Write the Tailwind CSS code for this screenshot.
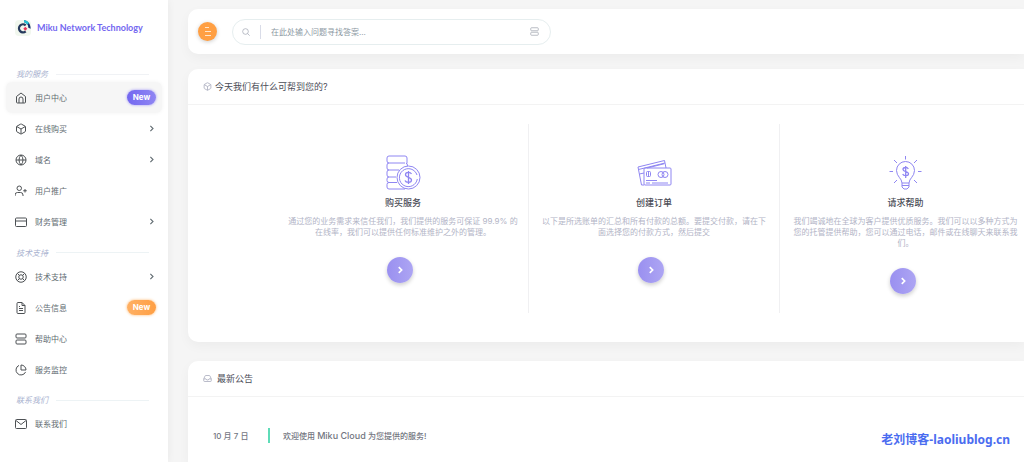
<!DOCTYPE html>
<html lang="en">
<head>
<meta charset="utf-8">
<title>Miku Network Technology</title>
<script src="https://cdn.jsdelivr.net/npm/@tailwindcss/browser@4"></script>
</head>
<body class="bg-[#f5f5f5] font-['Inter','Noto_Sans_CJK_SC',sans-serif] text-[8px] text-[#626c72]">
<svg class="hidden">
  <defs>
    <symbol id="box" viewBox="0 0 24 24"><path d="M21 16V8a2 2 0 0 0-1-1.700l-7-4a2 2 0 0 0-2 0l-7 4A2 2 0 0 0 3 8v8a2 2 0 0 0 1 1.700l7 4a2 2 0 0 0 2 0l7-4a2 2 0 0 0 1-1.700zM3.300 7 12 12l8.700-5M12 22V12"/></symbol>
    <symbol id="server" viewBox="0 0 24 24"><rect x="2" y="2" width="20" height="8" rx="2"/><rect x="2" y="14" width="20" height="8" rx="2"/><path d="M6 6h.01M6 18h.01"/></symbol>
    <symbol id="chev" viewBox="0 0 24 24"><path d="m9 5 7 7-7 7"/></symbol>
  </defs>
</svg>
<div class="flex min-h-screen overflow-hidden relative">
  <aside class="w-[168px] shrink-0 bg-white shadow-[0_0_8px_rgba(0,0,0,0.06)]">
    <a href="#" class="flex items-center h-[59px] pl-[15px] pb-1 gap-[6px] font-['Lato',sans-serif] text-[9px] font-bold text-[#7367f0] whitespace-nowrap">
      <svg class="size-4 shrink-0" viewBox="0 0 48 48">
        <rect width="48" height="48" rx="12" fill="#f1f7ee"/>
        <path d="M32 16A12 12 0 1 0 32 34" fill="none" stroke="#263a5c" stroke-width="7"/>
        <path d="M27 1c9 0 20 9 20 25l-7-3C40 14 34 8 27 7z" fill="#15306b"/>
        <path d="M27 1c6 0 11 3 15 8l-6 5c-2-4-5-6-9-7z" fill="#21c4d6"/>
        <path d="m31 20 6 6-6 6-6-6z" fill="#e8345a"/>
      </svg>
      Miku Network Technology
    </a>
    <nav>
      <div class="flex items-center h-[23px] pt-[7px] pl-4 pr-[19px] gap-2 italic text-[#a9b2cf]">我的服务<span class="flex-1 h-px bg-[#f0f2f5]"></span></div>
      <a href="#" class="flex items-center h-[31px] mx-[6px] pl-[9px] pr-[6px] gap-2 rounded-md bg-[#f6f6f6] shadow-[0_0_4px_#f3f3f3]">
        <svg class="size-3 fill-none stroke-[#4d5154] stroke-2" viewBox="0 0 24 24"><path d="m3 9 9-7 9 7v11a2 2 0 0 1-2 2H5a2 2 0 0 1-2-2zM8 22v-8a4 4 0 0 1 8 0v8"/></svg>
        <span class="flex-1">用户中心</span>
        <span class="h-[15px] w-[29px] rounded-full bg-linear-to-r from-[#7367f0] to-[#9086f3] text-white font-bold text-center leading-[15px] shadow-[0_0_3px_#9e95f5]">New</span>
      </a>
      <a href="#" class="flex items-center h-[31px] mx-[6px] pl-[9px] pr-[6px] gap-2">
        <svg class="size-3 fill-none stroke-[#4d5154] stroke-2"><use href="#box"/></svg>
        <span class="flex-1">在线购买</span>
        <svg class="size-[9px] fill-none stroke-current stroke-3"><use href="#chev"/></svg>
      </a>
      <a href="#" class="flex items-center h-[31px] mx-[6px] pl-[9px] pr-[6px] gap-2">
        <svg class="size-3 fill-none stroke-[#4d5154] stroke-2" viewBox="0 0 24 24"><circle cx="12" cy="12" r="10"/><path d="M2 12h20M12 2a15 15 0 0 1 4 10 15 15 0 0 1-4 10 15 15 0 0 1-4-10 15 15 0 0 1 4-10z"/></svg>
        <span class="flex-1">域名</span>
        <svg class="size-[9px] fill-none stroke-current stroke-3"><use href="#chev"/></svg>
      </a>
      <a href="#" class="flex items-center h-[31px] mx-[6px] pl-[9px] pr-[6px] gap-2">
        <svg class="size-3 fill-none stroke-[#4d5154] stroke-2" viewBox="0 0 24 24"><path d="M16 22v-2a5 5 0 0 0-5-5H5a5 5 0 0 0-5 5v2M20 8v7M23.500 11.500h-7"/><circle cx="8.500" cy="6.500" r="4.500"/></svg>
        <span class="flex-1">用户推广</span>
      </a>
      <a href="#" class="flex items-center h-[31px] mx-[6px] pl-[9px] pr-[6px] gap-2">
        <svg class="size-3 fill-none stroke-[#4d5154] stroke-2" viewBox="0 0 24 24"><rect x="1" y="4" width="22" height="17" rx="2"/><path d="M1 10h22"/></svg>
        <span class="flex-1">财务管理</span>
        <svg class="size-[9px] fill-none stroke-current stroke-3"><use href="#chev"/></svg>
      </a>
      <div class="flex items-center h-6 pt-[7px] pl-4 pr-[19px] gap-2 italic text-[#a9b2cf]">技术支持<span class="flex-1 h-px bg-[#edf3f5]"></span></div>
      <a href="#" class="flex items-center h-[31px] mx-[6px] pl-[9px] pr-[6px] gap-2">
        <svg class="size-3 fill-none stroke-[#4d5154] stroke-2" viewBox="0 0 24 24"><circle cx="12" cy="12" r="10.500"/><circle cx="12" cy="12" r="4.500"/><path d="m4.900 4.900 4.200 4.200M14.900 14.900l4.200 4.200M14.900 9.100l4.200-4.200M4.900 19.100l4.200-4.200"/></svg>
        <span class="flex-1">技术支持</span>
        <svg class="size-[9px] fill-none stroke-current stroke-3"><use href="#chev"/></svg>
      </a>
      <a href="#" class="flex items-center h-[31px] mx-[6px] pl-[9px] pr-[6px] gap-2">
        <svg class="size-3 fill-none stroke-[#4d5154] stroke-2" viewBox="0 0 24 24"><path d="M14 1H6a2 2 0 0 0-2 2v18a2 2 0 0 0 2 2h12a2 2 0 0 0 2-2V7zM14 1v6h6M16 13H8M16 17H8M10 9H8"/></svg>
        <span class="flex-1">公告信息</span>
        <span class="h-[15px] w-[29px] rounded-full bg-linear-to-r from-[#ffb063] to-[#ff9f43] text-white font-bold text-center leading-[15px] shadow-[0_0_3px_#ffb76e]">New</span>
      </a>
      <a href="#" class="flex items-center h-[31px] mx-[6px] pl-[9px] pr-[6px] gap-2">
        <svg class="size-3 fill-none stroke-[#4d5154] stroke-2"><use href="#server"/></svg>
        <span class="flex-1">帮助中心</span>
      </a>
      <a href="#" class="flex items-center h-[31px] mx-[6px] pl-[9px] pr-[6px] gap-2">
        <svg class="size-3 fill-none stroke-[#4d5154] stroke-2" viewBox="0 0 24 24"><path d="M21.200 15.900A10 10 0 1 1 8 2.800M22 12A10 10 0 0 0 12 2v10z"/></svg>
        <span class="flex-1">服务监控</span>
      </a>
      <div class="flex items-center h-[23px] pt-[7px] pl-4 pr-[19px] gap-2 italic text-[#a9b2cf]">联系我们<span class="flex-1 h-px bg-[#edf3f5]"></span></div>
      <a href="#" class="flex items-center h-[31px] mx-[6px] pl-[9px] pr-[6px] gap-2">
        <svg class="size-3 fill-none stroke-[#4d5154] stroke-2" viewBox="0 0 24 24"><rect x="1" y="3" width="22" height="18" rx="2"/><path d="m2 5 10 8 10-8"/></svg>
        <span class="flex-1">联系我们</span>
      </a>
    </nav>
  </aside>

  <main class="flex-1 min-w-0 flex flex-col pl-5 pt-[9px]">
    <header class="flex items-center h-[45px] rounded-l-[10px] bg-white pl-[10px] gap-[15px] shadow-[0_4px_12px_rgba(0,0,0,0.04)]">
      <button aria-label="Menu" class="size-[19px] rounded-full bg-[#ff9f43] flex items-center justify-center shadow-[0_1px_4px_rgba(0,0,0,0.2)]">
        <svg class="w-2 h-[9px] stroke-[#ffe6cc]" viewBox="0 0 8 9"><path d="M1 .5h4M1 4.500h6M1 8.500h6"/></svg>
      </button>
      <form class="flex items-center w-[319px] h-[26px] rounded-full border border-[#e6eeef] pl-[9px] pr-[11px]">
        <svg class="size-2 fill-none stroke-[#9a9fac] stroke-2 overflow-visible" viewBox="0 0 24 24"><circle cx="10.500" cy="10.500" r="8.500"/><path d="m17 17 6 6"/></svg>
        <span class="w-px h-[14px] ml-[10px] mr-[10px] bg-[#d9dce8]"></span>
        <input aria-label="Search" placeholder="在此处输入问题寻找答案..." class="flex-1 min-w-0 outline-none placeholder:text-[#8c99a3]">
        <svg class="size-[9px] fill-none stroke-[#a3a7b0] stroke-2"><use href="#server"/></svg>
      </form>
    </header>

    <section class="mt-[15px] h-[273px] rounded-l-[10px] bg-white shadow-[0_4px_12px_rgba(0,0,0,0.04)]">
      <h2 class="flex items-center h-9 pl-[15px] gap-[3px] border-b border-[#f3f3f3] text-[9px] text-[#4b4d57]">
        <svg class="size-[9px] fill-none stroke-[#a3a6b8] stroke-2"><use href="#box"/></svg>
        今天我们有什么可帮到您的?
      </h2>
      <div class="flex pt-[19px] pl-[90px] overflow-hidden">
        <article class="w-[251px] shrink-0 h-[189px] border-r border-[#f0f0f2] px-[10px] pt-[31px] flex flex-col items-center text-center">
          <svg class="w-[35px] h-[35px] fill-none stroke-[#8f86f2]" viewBox="0 0 35 35"><path d="M21 8.500V3a2 2 0 0 0-2-2H3a2 2 0 0 0-2 2v3a2 2 0 0 0 2 2h16M3 8a2 2 0 0 0-2 2v3a2 2 0 0 0 2 2h10M20 8q1.500.5 1.500 3M3 15a2 2 0 0 0-2 2v3a2 2 0 0 0 2 2h7M3 22a2 2 0 0 0-2 2v1.500a2 2 0 0 0 2 2h8M3 27.500a2 2 0 0 0-2 2V32a2 2 0 0 0 2 2h16"/><circle cx="22.500" cy="22.500" r="11.500"/><path d="M31 20A9 9 0 1 0 31.300 24"/><path stroke-width="1.300" d="M25.500 19c-1-2-6-2.500-6 .8 0 3 6 2 6 5.200 0 3-5.500 3-6.500.5M22.500 16v13"/></svg>
          <h3 class="mt-[6px] leading-[14px] text-[9px] font-medium text-[#4b4d57]">购买服务</h3>
          <p class="mt-[6px] leading-[11px] text-[#b2b4c6]">通过您的业务需求来信任我们，我们提供的服务可保证 99.9% 的在线率，我们可以提供任何标准维护之外的管理。</p>
          <button aria-label="购买服务" class="mt-[19px] mr-[6px] size-[26px] shrink-0 rounded-full bg-linear-to-r from-[#9a90f0] to-[#ada5f3] flex items-center justify-center shadow-[0_2px_4px_rgba(0,0,0,0.2)]"><svg class="size-[10px] fill-none stroke-white stroke-4"><use href="#chev"/></svg></button>
        </article>
        <article class="w-[251px] shrink-0 h-[189px] border-r border-[#f0f0f2] px-[10px] pt-[31px] flex flex-col items-center text-center">
          <svg class="w-[35px] h-[35px] fill-none stroke-[#8f86f2]" viewBox="0 0 35 35"><path d="M7 30H4.500L1 12 27.500 5.500 29 13M1.500 14.500 28 8M2.500 19 7 18M10 13l17-4.200"/><rect x="7" y="13" width="27" height="17" rx="1"/><rect x="9.500" y="16.500" width="4" height="5" rx="1"/><path d="M11.500 17v4M9 25.500h11M9 28h4M15 28h16"/><circle cx="24" cy="19.500" r="3"/><circle cx="28" cy="19.500" r="3"/></svg>
          <h3 class="mt-[6px] leading-[14px] text-[9px] font-medium text-[#4b4d57]">创建订单</h3>
          <p class="mt-[6px] leading-[11px] text-[#b2b4c6]">以下是所选账单的汇总和所有付款的总额。要提交付款，请在下面选择您的付款方式，然后提交</p>
          <button aria-label="创建订单" class="mt-[19px] mr-[6px] size-[26px] shrink-0 rounded-full bg-linear-to-r from-[#9a90f0] to-[#ada5f3] flex items-center justify-center shadow-[0_2px_4px_rgba(0,0,0,0.2)]"><svg class="size-[10px] fill-none stroke-white stroke-4"><use href="#chev"/></svg></button>
        </article>
        <article class="w-[251px] shrink-0 h-[189px] px-[10px] pt-[31px] flex flex-col items-center text-center">
          <svg class="w-[35px] h-[35px] fill-none stroke-[#8f86f2]" viewBox="0 0 35 35"><path d="M14 28c0-4.500-5.500-6.500-5.500-12.500a9 9 0 0 1 18 0c0 6-5.500 8-5.500 12.500zM14 28v4l2 2h3l2-2v-4M14 30.500h7M17.500 1v3.500M1.500 16.500H5M30 16.500h3.500M6 5l3 3M29 5l-3 3M6 28l3-3M29 28l-3-3"/><path stroke-width="1.300" d="M20.300 14c-1-2.200-5.300-2-5.300.5 0 2.500 5.500 1.500 5.500 4.200 0 2.500-5 2.500-5.800.3M17.700 11v12"/></svg>
          <h3 class="mt-[6px] leading-[14px] text-[9px] font-medium text-[#4b4d57]">请求帮助</h3>
          <p class="mt-[6px] leading-[11px] text-[#b2b4c6]">我们竭诚地在全球为客户提供优质服务。我们可以以多种方式为您的托管提供帮助，您可以通过电话，邮件或在线聊天来联系我们。</p>
          <button aria-label="请求帮助" class="mt-[19px] mr-[6px] size-[26px] shrink-0 rounded-full bg-linear-to-r from-[#9a90f0] to-[#ada5f3] flex items-center justify-center shadow-[0_2px_4px_rgba(0,0,0,0.2)]"><svg class="size-[10px] fill-none stroke-white stroke-4"><use href="#chev"/></svg></button>
        </article>
      </div>
    </section>

    <section class="mt-[19px] flex-1 rounded-tl-[10px] bg-white shadow-[0_4px_12px_rgba(0,0,0,0.04)]">
      <h2 class="flex items-center h-9 pl-[15px] gap-[5px] border-b border-[#f3f3f3] text-[9px] text-[#4b4d57]">
        <svg class="size-[9px] fill-none stroke-[#a3a6b8] stroke-2" viewBox="0 0 24 24"><path d="M22 13h-6l-2 3h-4l-2-3H2M5.500 5.100 2 13v5a2 2 0 0 0 2 2h16a2 2 0 0 0 2-2v-5l-3.500-7.900A2 2 0 0 0 16.800 4H7.200a2 2 0 0 0-1.700 1.100z"/></svg>
        最新公告
      </h2>
      <div class="flex items-center mt-[31px] pl-[25px] h-[15px] text-[#73767f]">
        <time class="w-[55px] font-medium">10 月 7 日</time>
        <a href="#" class="border-l-2 border-[#5fdcb8] pl-[13px] h-[15px] leading-[15px] font-medium">欢迎使用 <span class="text-[9px]">Miku Cloud</span> 为您提供的服务!</a>
      </div>
    </section>
  </main>
  <div class="absolute right-[14px] bottom-[14px] text-[12px] leading-4 font-bold text-[#4a6cf0] font-['Noto_Sans','Noto_Sans_CJK_SC',sans-serif]">老刘博客-laoliublog.cn</div>
</div>
</body>
</html>
